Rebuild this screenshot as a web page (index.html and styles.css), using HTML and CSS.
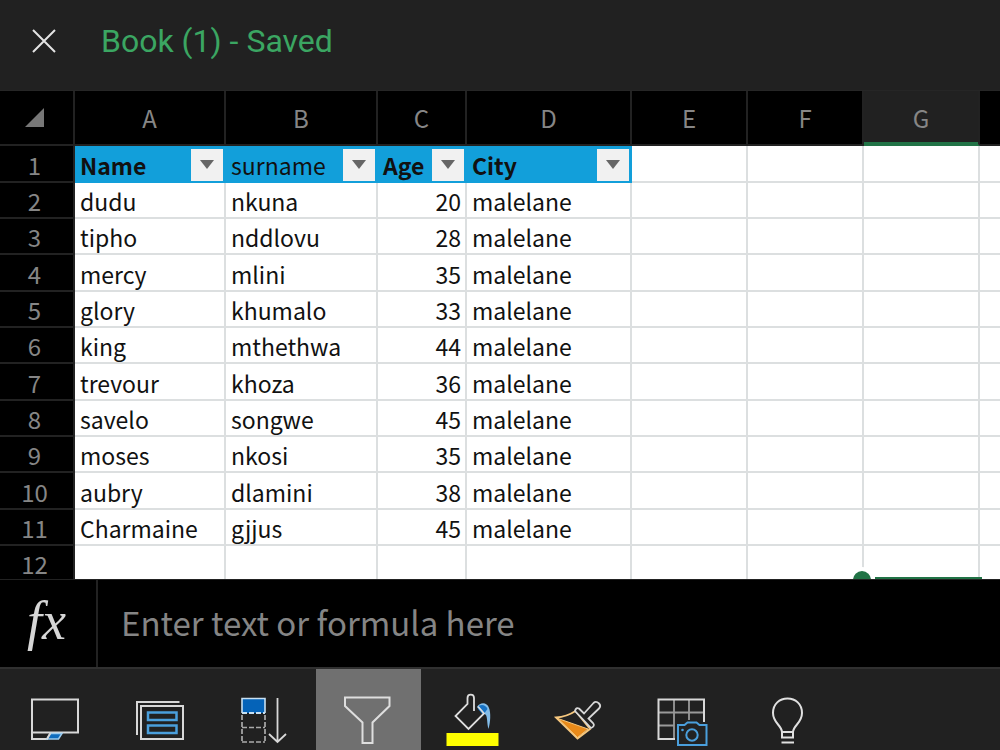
FILE: index.html
```html
<!DOCTYPE html>
<html lang="en">
<head>
<meta charset="utf-8">
<meta name="viewport" content="width=device-width, initial-scale=1">
<title>Book (1)</title>
<link rel="stylesheet" href="styles.css">
</head>
<body>
<div class="app">
  <header class="topbar">
    <button class="close" type="button" aria-label="Close">
      <svg width="24" height="24" viewBox="0 0 24 24"><path d="M1 1 23 23M23 1 1 23" fill="none" stroke="#e4e4e4" stroke-width="2"/></svg>
    </button>
    <h1 class="title">Book (1) - Saved</h1>
  </header>

  <main class="sheet">
    <table class="grid">
      <colgroup>
        <col class="c-head"><col class="c-a"><col class="c-b"><col class="c-c"><col class="c-d"><col class="c-e"><col class="c-e"><col class="c-e"><col class="c-e">
      </colgroup>
      <thead>
        <tr>
          <th class="corner"><svg width="19" height="19" viewBox="0 0 19 19"><path d="M19 0V19H0Z" fill="#777"/></svg></th>
          <th>A</th><th>B</th><th>C</th><th>D</th><th>E</th><th>F</th><th class="active">G</th><th></th>
        </tr>
      </thead>
      <tbody>
        <tr class="fields">
          <th>1</th>
          <td><div class="field"><b>Name</b><button class="filter" type="button" aria-label="Filter Name"></button></div></td>
          <td><div class="field"><span>surname</span><button class="filter" type="button" aria-label="Filter surname"></button></div></td>
          <td><div class="field"><b>Age</b><button class="filter" type="button" aria-label="Filter Age"></button></div></td>
          <td><div class="field"><b>City</b><button class="filter" type="button" aria-label="Filter City"></button></div></td>
          <td></td><td></td><td></td><td></td>
        </tr>
        <tr><th>2</th><td>dudu</td><td>nkuna</td><td class="num">20</td><td>malelane</td><td></td><td></td><td></td><td></td></tr>
        <tr><th>3</th><td>tipho</td><td>nddlovu</td><td class="num">28</td><td>malelane</td><td></td><td></td><td></td><td></td></tr>
        <tr><th>4</th><td>mercy</td><td>mlini</td><td class="num">35</td><td>malelane</td><td></td><td></td><td></td><td></td></tr>
        <tr><th>5</th><td>glory</td><td>khumalo</td><td class="num">33</td><td>malelane</td><td></td><td></td><td></td><td></td></tr>
        <tr><th>6</th><td>king</td><td>mthethwa</td><td class="num">44</td><td>malelane</td><td></td><td></td><td></td><td></td></tr>
        <tr><th>7</th><td>trevour</td><td>khoza</td><td class="num">36</td><td>malelane</td><td></td><td></td><td></td><td></td></tr>
        <tr><th>8</th><td>savelo</td><td>songwe</td><td class="num">45</td><td>malelane</td><td></td><td></td><td></td><td></td></tr>
        <tr><th>9</th><td>moses</td><td>nkosi</td><td class="num">35</td><td>malelane</td><td></td><td></td><td></td><td></td></tr>
        <tr><th>10</th><td>aubry</td><td>dlamini</td><td class="num">38</td><td>malelane</td><td></td><td></td><td></td><td></td></tr>
        <tr><th>11</th><td>Charmaine</td><td>gjjus</td><td class="num">45</td><td>malelane</td><td></td><td></td><td></td><td></td></tr>
        <tr><th>12</th><td></td><td></td><td></td><td></td><td></td><td></td><td class="anchor"><span class="edge"></span><span class="handle"></span></td><td></td></tr>
      </tbody>
    </table>
  </main>

  <div class="formula">
    <label class="fx" for="formula">fx</label>
    <input class="entry" id="formula" type="text" placeholder="Enter text or formula here">
  </div>

  <nav class="toolbar" aria-label="Tools">
    <button class="tool" type="button" aria-label="Ribbon">
      <svg viewBox="0 0 105 81"><g fill="none" stroke="#d8d8d8" stroke-width="2"><path d="M31 30.500H77V63.500H31ZM31 63.500V70H47"/></g><path d="M49 64.500H61L57.500 70H46Z" fill="#0f6cbd" stroke="#9ccbee" stroke-width="1.500"/><path d="M49.500 64 46 70" stroke="#d8d8d8" stroke-width="2"/></svg>
    </button>
    <button class="tool" type="button" aria-label="Card view">
      <svg viewBox="0 0 105 81"><g fill="none" stroke="#d8d8d8" stroke-width="2"><path d="M31 66V33H73.500"/><path d="M35 37H77V70H35Z"/></g><path d="M42 43.500H70.500V51H42ZM42 56.500H70.500V64H42Z" fill="none" stroke="#4a9fdc" stroke-width="2.500"/></svg>
    </button>
    <button class="tool" type="button" aria-label="Sort column">
      <svg viewBox="0 0 105 81"><path d="M31 29.500H54V44H31Z" fill="#0563b8"/><path d="M31 44V29.500H54V44" fill="none" stroke="#c8e0f2" stroke-width="1.600"/><path d="M31 44H54" stroke="#c8e0f2" stroke-width="2" stroke-dasharray="5 2"/><path d="M31 46V73M54 46V73M31 58.500H54M31 73H54" fill="none" stroke="#aaa" stroke-width="1.700" stroke-dasharray="5 2"/><path d="M66.500 29V72.500M58 65 66.500 73 75 65" fill="none" stroke="#d8d8d8" stroke-width="1.800"/></svg>
    </button>
    <button class="tool selected" type="button" aria-label="Filter" aria-pressed="true">
      <svg viewBox="0 0 105 81"><path d="M29 28.500H73.500V37L56.500 53.500V74H46.500V53.500L29 37Z" fill="none" stroke="#dedede" stroke-width="2"/></svg>
    </button>
    <button class="tool" type="button" aria-label="Fill colour">
      <svg viewBox="0 0 105 81"><path d="M25.500 64H77.500V77H25.500Z" fill="#ff0"/><path d="M56 38C59 33 66 33 68 39C70 44 69.500 53 67.500 60C66 55 66.500 49 65 46L61 43Z" fill="#83bde9"/><path d="M56.500 38C59 35 64.500 35 66.500 40L62 46 57 40Z" fill="#1672c4"/><path d="M53 42V29C53 24.500 46.500 24.500 46.500 29V35L34.500 47 47.500 60 63 44.500 57 37.500" fill="none" stroke="#dedede" stroke-width="1.800"/></svg>
    </button>
    <button class="tool" type="button" aria-label="Format painter">
      <svg viewBox="0 0 105 81"><path d="M30 48.500C39 48 45 45 49.500 42L64 60 51.500 69.500Z" fill="#222" stroke="#f5c77e" stroke-width="1.800"/><path d="M32 49.500 62 60 51.500 68.500Z" fill="#e88a1a" stroke="#f5c77e" stroke-width="1"/><path d="M53 39.500 58 44.500 67.500 34Q70 31.500 73 34.500Q75.500 37 73 39.500L62.500 49.500 67 54Q69.500 57 65 59L49 42Q50 38 53 39.500Z" fill="#222" stroke="#d8d8d8" stroke-width="1.800"/></svg>
    </button>
    <button class="tool" type="button" aria-label="Data from picture">
      <svg viewBox="0 0 105 81"><path d="M43 31V70M58 31V51M28 43.500H73M28 56.500H43" fill="none" stroke="#999" stroke-width="1.800"/><path d="M44 70H27.500V30.500H73V53" fill="none" stroke="#d8d8d8" stroke-width="2"/><path d="M47 56H53.500L56.500 53.500H65.500L68.500 56H75.500V76H47Z" fill="#222" stroke="#4a9fdc" stroke-width="2"/><circle cx="61" cy="66" r="5.700" fill="none" stroke="#4a9fdc" stroke-width="2"/><circle cx="51.500" cy="61" r="1.300" fill="#4a9fdc"/></svg>
    </button>
    <button class="tool" type="button" aria-label="Tell me">
      <svg viewBox="0 0 105 81"><path d="M46 63C45.500 56 37 54 37 44C37 35 43.500 29.500 51.500 29.500S66 35 66 44C66 54 57.500 56 57 63" fill="none" stroke="#e0e0e0" stroke-width="2"/><path d="M46 63V68.500H57V63ZM46 63H57M45.500 73.500H58" fill="none" stroke="#e0e0e0" stroke-width="2"/></svg>
    </button>
  </nav>
</div>
</body>
</html>
```
FILE: styles.css
```css
* { box-sizing: border-box; }

body {
  margin: 0;
  background: #000;
  font-family: "Noto Sans CJK JP", Roboto, sans-serif;
}

button {
  padding: 0;
  border: 0;
  background: none;
  cursor: pointer;
}

svg { display: block; }

.app {
  display: flex;
  flex-direction: column;
  height: 100vh;
  overflow: hidden;
}

.topbar {
  display: flex;
  flex: none;
  align-items: center;
  gap: 45px;
  padding: 18px 32px 26px;
  background: #212121;
  border-bottom: 1px solid #262626;
}

.title {
  margin: 0;
  color: #3ba662;
  font: 400 32px/46px Roboto, sans-serif;
}

.sheet {
  flex: 1;
  min-height: 0;
  overflow: hidden;
  background: #fff;
}

.grid {
  width: 1096px;
  table-layout: fixed;
  border-collapse: separate;
  border-spacing: 0;
  color: #111;
  font-size: 23px;
  line-height: 32px;
}

.c-head { width: 75px; }
.c-a { width: 151px; }
.c-b { width: 152px; }
.c-c { width: 89px; }
.c-d { width: 165px; }
.c-e { width: 116px; }

.grid th {
  padding: 0;
  background: #000;
  color: #868686;
  font-size: 24px;
  font-weight: 400;
  border-right: 2px solid #222;
  border-bottom: 2px solid #222;
}

.grid thead th { height: 55px; }
.grid tbody tr { height: 36px; }
.grid tbody tr:nth-child(3n+1) { height: 37px; }

.grid tbody th { padding: 2px 4px 0 0; }

.corner svg { margin-left: 25px; }

.grid thead .active {
  background: #212121;
  border-bottom-color: #217346;
  box-shadow: inset 0 -2px #217346;
}

.grid td {
  padding: 2px 4px 0 5px;
  border-right: 2px solid #dcdfe0;
  border-bottom: 2px solid #dcdfe0;
  white-space: nowrap;
}

.grid .num { text-align: right; }

.fields td:has(.field) {
  padding-right: 1px;
  background: #129fda;
  border-color: #129fda;
}

.field {
  display: flex;
  align-items: center;
  justify-content: space-between;
}

.filter {
  display: flex;
  align-items: center;
  justify-content: center;
  width: 32px;
  height: 32px;
  background: #f1f1f1;
}

.filter::before {
  content: "";
  border: 7px solid transparent;
  border-top: 9px solid #666;
  border-bottom: 0;
}

.anchor { position: relative; }

.handle {
  position: absolute;
  top: 25px;
  left: -11px;
  width: 18px;
  height: 18px;
  border-radius: 50%;
  background: #217346;
  box-shadow: 0 0 0 4px #fff;
}

.edge {
  position: absolute;
  top: 31px;
  left: 11px;
  width: 107px;
  height: 3px;
  background: #217346;
}

.formula {
  display: flex;
  flex: none;
  height: 90px;
  background: #000;
  border-top: 1px solid #222;
  border-bottom: 2px solid #303030;
}

.fx {
  flex: none;
  width: 98px;
  padding-left: 27px;
  border-right: 2px solid #222;
  color: #d6d6d6;
  font: italic 54px/82px "Liberation Serif", serif;
}

.entry {
  flex: 1;
  min-width: 0;
  padding: 0 23px 4px;
  border: 0;
  outline: 0;
  background: #000;
  color: #ddd;
  font: 33px "Noto Sans CJK JP", Roboto, sans-serif;
}

.entry::placeholder { color: #858585; opacity: 1; }

.toolbar {
  display: flex;
  flex: none;
  height: 81px;
  padding-left: 1px;
  background: #212121;
}

.tool {
  flex: none;
  width: 105px;
}

.tool svg { width: 105px; height: 81px; }

.selected { background: #707070; }
```
